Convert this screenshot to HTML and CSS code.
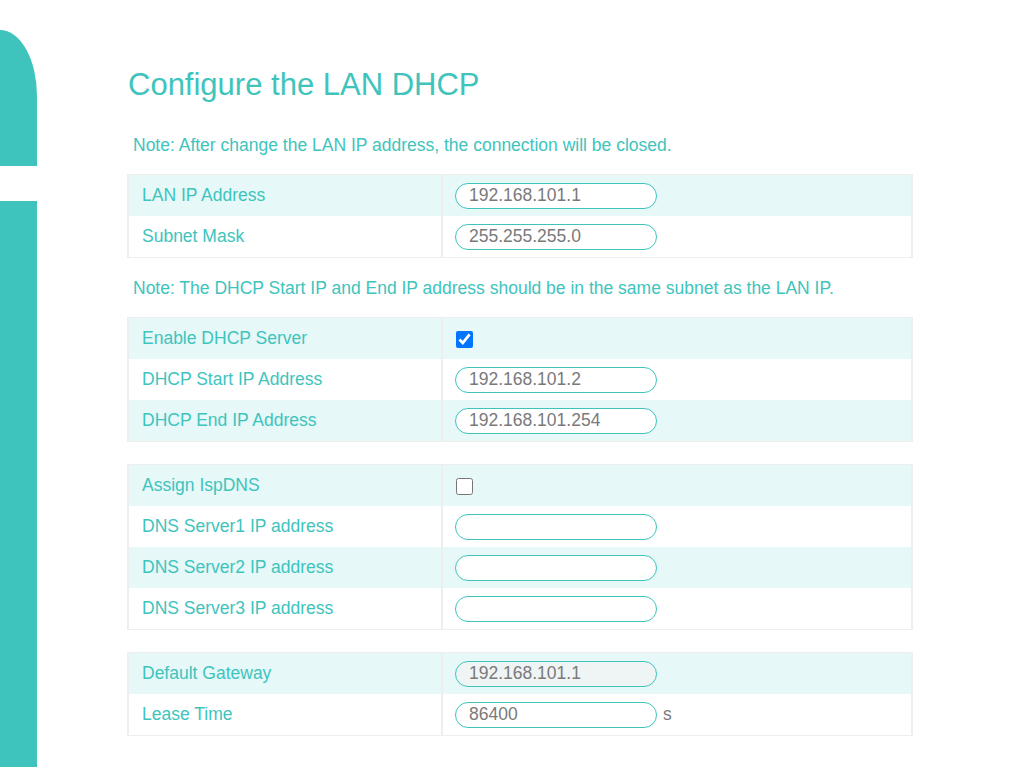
FILE: index.html
```html
<!DOCTYPE html>
<html>
<head>
<meta charset="utf-8">
<link rel="stylesheet" href="styles.css">
</head>
<body>
<div class="page">
  <aside class="sidebar">
    <div class="side-top"></div>
    <div class="side-bottom"></div>
  </aside>
  <main class="content">
    <h1 class="title">Configure the LAN DHCP</h1>
    <p class="note">Note: After change the LAN IP address, the connection will be closed.</p>
    <table class="grid">
      <tr class="odd"><td class="lbl">LAN IP Address</td><td class="val"><input class="field" type="text" value="192.168.101.1"></td></tr>
      <tr><td class="lbl">Subnet Mask</td><td class="val"><input class="field" type="text" value="255.255.255.0"></td></tr>
    </table>
    <p class="note">Note: The DHCP Start IP and End IP address should be in the same subnet as the LAN IP.</p>
    <table class="grid">
      <tr class="odd"><td class="lbl">Enable DHCP Server</td><td class="val"><input class="check" type="checkbox" checked></td></tr>
      <tr><td class="lbl">DHCP Start IP Address</td><td class="val"><input class="field" type="text" value="192.168.101.2"></td></tr>
      <tr class="odd"><td class="lbl">DHCP End IP Address</td><td class="val"><input class="field" type="text" value="192.168.101.254"></td></tr>
    </table>
    <table class="grid spaced">
      <tr class="odd"><td class="lbl">Assign IspDNS</td><td class="val"><input class="check" type="checkbox"></td></tr>
      <tr><td class="lbl">DNS Server1 IP address</td><td class="val"><input class="field" type="text" value=""></td></tr>
      <tr class="odd"><td class="lbl">DNS Server2 IP address</td><td class="val"><input class="field" type="text" value=""></td></tr>
      <tr><td class="lbl">DNS Server3 IP address</td><td class="val"><input class="field" type="text" value=""></td></tr>
    </table>
    <table class="grid spaced">
      <tr class="odd"><td class="lbl">Default Gateway</td><td class="val"><input class="field disabled" type="text" value="192.168.101.1" disabled></td></tr>
      <tr><td class="lbl">Lease Time</td><td class="val"><input class="field" type="text" value="86400"><span class="unit">s</span></td></tr>
    </table>
  </main>
</div>
</body>
</html>
```

FILE: styles.css
```css
html, body {
  margin: 0;
  padding: 0;
  background: #ffffff;
}
body {
  font-family: "Liberation Sans", Arial, sans-serif;
  color: #3ec4bd;
}
.page {
  display: flex;
  min-height: 767px;
}
.sidebar {
  width: 37px;
  flex: 0 0 37px;
  display: flex;
  flex-direction: column;
  gap: 35px;
  padding-top: 30px;
  height: 767px;
  box-sizing: border-box;
}
.side-top {
  height: 136px;
  background: #3ec4bd;
  border-top-right-radius: 37px 66px;
}
.side-bottom {
  flex: 1;
  background: #3ec4bd;
}
.content {
  margin-left: 90px;
  width: 786px;
  padding-top: 67px;
}
.title {
  margin: 0;
  font-size: 31px;
  font-weight: normal;
  line-height: 36px;
  color: #3ec4bd;
  padding-left: 1px;
}
.note {
  margin: 0;
  padding-left: 6px;
  font-size: 17.5px;
  line-height: 20px;
  height: 20px;
  padding-top: 32px;
  padding-bottom: 19px;
}
.grid + .note {
  padding-top: 20px;
}
.grid {
  width: 786px;
  table-layout: fixed;
  border-collapse: separate;
  border-spacing: 0;
  border-style: solid;
  border-color: #eeeeee;
  border-width: 1px 2px 1px 2px;
  box-sizing: border-box;
}
.grid.spaced {
  margin-top: 22px;
}
.grid tr {
  background: #ffffff;
}
.grid tr.odd {
  background: #e6f8f8;
}
.grid td {
  height: 41px;
  padding: 0;
  font-size: 17.5px;
  vertical-align: middle;
  box-sizing: border-box;
}
.lbl {
  width: 314px;
  padding-left: 13px !important;
  border-right: 2px solid #eeeeee;
}
.val {
  padding-left: 12px !important;
}
.field {
  box-sizing: border-box;
  width: 202px;
  height: 26px;
  border: 1px solid #3ec4bd;
  border-radius: 13px;
  padding: 0 0 0 13px;
  font-family: "Liberation Sans", Arial, sans-serif;
  font-size: 17.5px;
  color: #7a7a7a;
  background: #ffffff;
  outline: none;
  vertical-align: middle;
  margin: 0;
}
.field.disabled {
  background: #eff4f4;
  color: #7a7a7a;
}
.check {
  width: 17px;
  height: 17px;
  margin: 0 0 0 1px;
  vertical-align: middle;
}
.unit {
  margin-left: 6px;
  color: #7a7a7a;
  font-size: 17.5px;
  vertical-align: middle;
}
```
